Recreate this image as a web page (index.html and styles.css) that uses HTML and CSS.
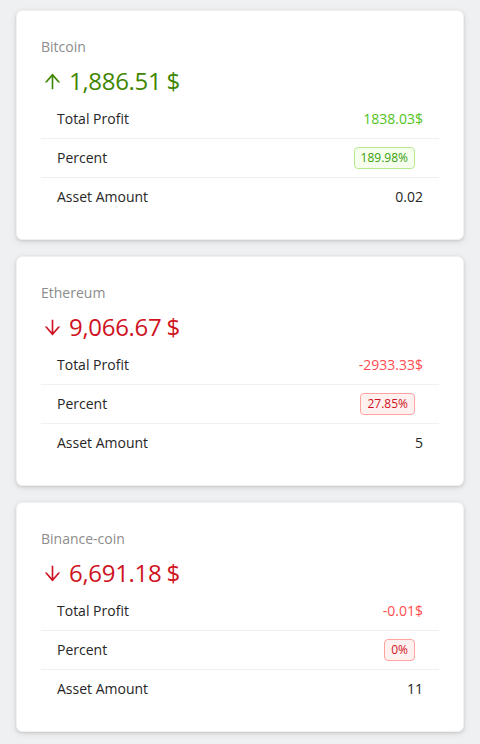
FILE: index.html
```html
<!DOCTYPE html>
<html>
<head>
<meta charset="utf-8">
<link rel="stylesheet" href="styles.css">
</head>
<body>
<div class="page">
  <div class="card">
    <div class="stat-title">Bitcoin</div>
    <div class="stat-value up">
      <svg class="arrow" viewBox="64 64 896 896" fill="currentColor"><path d="M868 545.5L536.1 163a31.96 31.96 0 00-48.3 0L156 545.5a7.97 7.97 0 006 13.2h81c4.6 0 9-2 12.1-5.5L474 300.9V864c0 4.4 3.6 8 8 8h60c4.4 0 8-3.6 8-8V300.9l218.9 252.3c3 3.5 7.4 5.5 12.1 5.5h81c6.8 0 10.5-8 6-13.2z"/></svg>
      <span class="num">1,886.51</span><span class="suffix">$</span>
    </div>
    <ul class="list">
      <li class="row"><span>Total Profit</span><span class="profit-up">1838.03$</span></li>
      <li class="row"><span>Percent</span><span class="tag tag-green">189.98%</span></li>
      <li class="row"><span>Asset Amount</span><span>0.02</span></li>
    </ul>
  </div>
  <div class="card">
    <div class="stat-title">Ethereum</div>
    <div class="stat-value down">
      <svg class="arrow" viewBox="64 64 896 896" fill="currentColor"><path d="M862 465.3h-81c-4.6 0-9 2-12.1 5.5L550 723.1V160c0-4.4-3.6-8-8-8h-60c-4.4 0-8 3.6-8 8v563.1L255.1 470.8c-3-3.5-7.4-5.5-12.1-5.5h-81c-6.8 0-10.5 8.1-6 13.2L487.9 861a31.96 31.96 0 0048.3 0L868 478.5c4.4-5.2.7-13.2-6-13.2z"/></svg>
      <span class="num">9,066.67</span><span class="suffix">$</span>
    </div>
    <ul class="list">
      <li class="row"><span>Total Profit</span><span class="profit-down">-2933.33$</span></li>
      <li class="row"><span>Percent</span><span class="tag tag-red">27.85%</span></li>
      <li class="row"><span>Asset Amount</span><span>5</span></li>
    </ul>
  </div>
  <div class="card">
    <div class="stat-title">Binance-coin</div>
    <div class="stat-value down">
      <svg class="arrow" viewBox="64 64 896 896" fill="currentColor"><path d="M862 465.3h-81c-4.6 0-9 2-12.1 5.5L550 723.1V160c0-4.4-3.6-8-8-8h-60c-4.4 0-8 3.6-8 8v563.1L255.1 470.8c-3-3.5-7.4-5.5-12.1-5.5h-81c-6.8 0-10.5 8.1-6 13.2L487.9 861a31.96 31.96 0 0048.3 0L868 478.5c4.4-5.2.7-13.2-6-13.2z"/></svg>
      <span class="num">6,691.18</span><span class="suffix">$</span>
    </div>
    <ul class="list">
      <li class="row"><span>Total Profit</span><span class="profit-down">-0.01$</span></li>
      <li class="row"><span>Percent</span><span class="tag tag-red">0%</span></li>
      <li class="row"><span>Asset Amount</span><span>11</span></li>
    </ul>
  </div>
</div>
</body>
</html>
```
FILE: styles.css
```css
html, body {
  margin: 0;
  padding: 0;
  background: #eff0f2;
}
body {
  font-family: "Open Sans", "Noto Sans", sans-serif;
  font-size: 14px;
  line-height: 22px;
  color: #262626;
}
.page {
  display: flex;
  flex-direction: column;
  gap: 16px;
  padding: 10px 16px 10px 16px;
}
.card {
  background: #fff;
  border: 1px solid #f0f0f0;
  border-radius: 6px;
  padding: 25px 24px 23px 24px;
  box-shadow: 0 1px 3px rgba(0,0,0,0.14), 0 2px 8px rgba(0,0,0,0.07);
}
.stat-title {
  color: #8c8c8c;
  font-size: 14px;
  line-height: 22px;
  margin-bottom: 4px;
}
.stat-value {
  display: flex;
  align-items: center;
  font-size: 24px;
  line-height: 38px;
  letter-spacing: -0.3px;
}
.stat-value.up { color: #3f8600; }
.stat-value.down { color: #cf1322; }
.arrow {
  width: 19px;
  height: 19px;
  margin: 0 7px 0 2px;
}
.suffix { margin-left: 5px; }
.list {
  list-style: none;
  margin: 0;
  padding: 0;
}
.row {
  display: flex;
  justify-content: space-between;
  align-items: center;
  padding: 8px 16px;
  border-bottom: 1px solid #f0f0f0;
}
.row:last-child { border-bottom: none; }
.profit-up { color: #52c41a; }
.profit-down { color: #ff4d4f; }
.tag {
  font-size: 12px;
  line-height: 20px;
  padding: 0 6px;
  border-radius: 4px;
  border: 1px solid;
  margin-right: 8px;
}
.tag-green { color: #389e0d; background: #f6ffed; border-color: #b7eb8f; }
.tag-red { color: #cf1322; background: #fff1f0; border-color: #ffa39e; }
```
